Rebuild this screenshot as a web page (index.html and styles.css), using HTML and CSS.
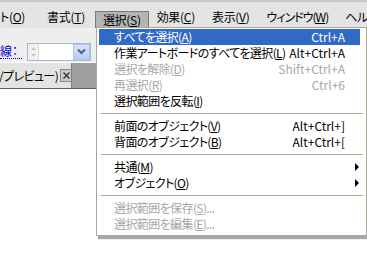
FILE: index.html
```html
<!DOCTYPE html>
<html lang="ja">
<head>
<meta charset="utf-8">
<link rel="stylesheet" href="styles.css">
</head>
<body>
<div class="app">
  <div class="menubar">
    <span class="mi first">ト(<u>O</u>)</span>
    <span class="mi">書式(<u>T</u>)</span>
    <span class="mi open">選択(<u>S</u>)</span>
    <span class="mi">効果(<u>C</u>)</span>
    <span class="mi">表示(<u>V</u>)</span>
    <span class="mi narrow">ウィンドウ(<u>W</u>)</span>
    <span class="mi">ヘルプ(<u>H</u>)</span>
  </div>
  <div class="toolbar">
    <span class="label">線：</span>
    <div class="combo">
      <span class="spin">
        <svg width="7" height="12" viewBox="0 0 7 12"><path d="M1 4 L3.5 1.5 L6 4 Z M1 8 L3.5 10.5 L6 8 Z" fill="#c6c3b8"/></svg>
      </span>
      <span class="field"></span>
      <span class="dd">
        <svg width="9" height="7" viewBox="0 0 9 7"><path d="M1 1.5 L4.5 5 L8 1.5" fill="none" stroke="#4d6185" stroke-width="2"/></svg>
      </span>
    </div>
  </div>
  <div class="tabs">
    <div class="tab">
      <span class="tabtext">RGB/プレビュー)</span>
      <span class="close">
        <svg width="7" height="7" viewBox="0 0 7 7"><path d="M0.5 0.5 L6.5 6.5 M6.5 0.5 L0.5 6.5" stroke="#333" stroke-width="1.3"/></svg>
      </span>
    </div>
  </div>
  <div class="canvas"></div>

  <div class="dropdown">
    <div class="item hl"><span class="t">すべてを選択(<u>A</u>)</span><span class="k">Ctrl+A</span></div>
    <div class="item"><span class="t">作業アートボードのすべてを選択(<u>L</u>)</span><span class="k">Alt+Ctrl+A</span></div>
    <div class="item dis"><span class="t">選択を解除(<u>D</u>)</span><span class="k">Shift+Ctrl+A</span></div>
    <div class="item dis"><span class="t">再選択(<u>R</u>)</span><span class="k">Ctrl+6</span></div>
    <div class="item"><span class="t">選択範囲を反転(<u>I</u>)</span><span class="k"></span></div>
    <div class="sep"></div>
    <div class="item"><span class="t">前面のオブジェクト(<u>V</u>)</span><span class="k">Alt+Ctrl+]</span></div>
    <div class="item"><span class="t">背面のオブジェクト(<u>B</u>)</span><span class="k">Alt+Ctrl+[</span></div>
    <div class="sep"></div>
    <div class="item sub"><span class="t">共通(<u>M</u>)</span><span class="arrow"></span></div>
    <div class="item sub"><span class="t">オブジェクト(<u>O</u>)</span><span class="arrow"></span></div>
    <div class="sep"></div>
    <div class="item dis"><span class="t">選択範囲を保存(<u>S</u>)...</span><span class="k"></span></div>
    <div class="item dis"><span class="t">選択範囲を編集(<u>E</u>)...</span><span class="k"></span></div>
  </div>
</div>
</body>
</html>
```

FILE: styles.css
```css
* { box-sizing: border-box; }
html, body {
  margin: 0;
  padding: 0;
  width: 367px;
  height: 269px;
  overflow: hidden;
  background: #ffffff;
}
body {
  font-family: "Noto Sans CJK JP", "Noto Sans", sans-serif;
  font-size: 12px;
  font-feature-settings: "palt";
  color: #000;
}
u { text-decoration-thickness: 1px; text-underline-offset: 1px; }
.app {
  position: relative;
  width: 367px;
  height: 269px;
  overflow: hidden;
}
.menubar {
  height: 28px;
  display: flex;
  align-items: flex-end;
  background: #e4e4e4;
  border-top: 2px solid #c8c8c8;
  white-space: nowrap;
  padding-bottom: 0;
  letter-spacing: -0.3px;
}
.mi {
  height: 18px;
  line-height: 16px;
  padding: 0 9px 0 8px;
  margin-bottom: 1px;
}
.mi.first { padding-left: 0; padding-right: 13px; }
.mi.first + .mi { padding-left: 9px; padding-right: 10px; }
.mi.narrow { letter-spacing: -1px; }
.mi.open {
  background: #b4b4b4;
  border: 1px solid #7a7a7a;
  border-bottom: none;
  padding: 0 7px 0 7px;
  margin-right: 0;
  margin-bottom: 0;
  height: 17px;
}
.toolbar {
  height: 34px;
  background: #eeeeee;
  display: flex;
  align-items: center;
  gap: 5px;
  padding-top: 13px;
}
.label {
  color: #0000cc;
  border-bottom: 1px dotted #0000cc;
  line-height: 14px;
  width: 22px;
}
.combo {
  width: 64px;
  height: 18px;
  border: 1px solid #a5b9d6;
  background: #fff;
  display: flex;
  align-items: stretch;
}
.spin {
  width: 11px;
  display: flex;
  align-items: center;
  justify-content: center;
  background: #f2f1ec;
  border-right: 1px solid #e0ded5;
}
.field { flex: 1; }
.dd {
  width: 17px;
  display: flex;
  align-items: center;
  justify-content: center;
  background: linear-gradient(#d7e3fb, #b8cdf4);
  border: 1px solid #b2c4e8;
}
.tabs {
  height: 27px;
  background: #9e9e9e;
  border-top: 1px solid #ffffff;
  border-bottom: 1px solid #5c5c5c;
  display: flex;
}
.tab {
  width: 72px;
  background: #e3e3e3;
  display: flex;
  align-items: center;
  overflow: hidden;
  white-space: nowrap;
  border-right: 1px solid #808080;
  letter-spacing: -0.6px;
}
.tabtext {
  margin-left: -23px;
  flex: none;
}
.close {
  width: 12px;
  height: 13px;
  margin-left: 2px;
  flex: none;
  background: #c8c8c8;
  border: 1px solid #8a8a8a;
  display: flex;
  align-items: center;
  justify-content: center;
}
.canvas { height: 179px; background: #fff; }

.dropdown {
  position: absolute;
  left: 96px;
  top: 27px;
  width: 271px;
  background: #fff;
  border: 1px solid #aca899;
  padding: 1px 6px 3px 2px;
  box-shadow: 2px 3px 1px rgba(0,0,0,0.35);
}
.item {
  height: 16px;
  display: flex;
  align-items: center;
  justify-content: space-between;
  padding: 0 15px 0 15px;
  white-space: nowrap;
  line-height: 16px;
}
.t { letter-spacing: -0.6px; }
.item.hl { background: #316ac5; color: #fff; }
.item.dis { color: #a7a6aa; }
.sep {
  height: 1px;
  background: #aca899;
  margin: 4px -3px 4px 2px;
}
.arrow {
  width: 0;
  height: 0;
  border-top: 4px solid transparent;
  border-bottom: 4px solid transparent;
  border-left: 4px solid #000;
  margin-right: -14px;
}
```
